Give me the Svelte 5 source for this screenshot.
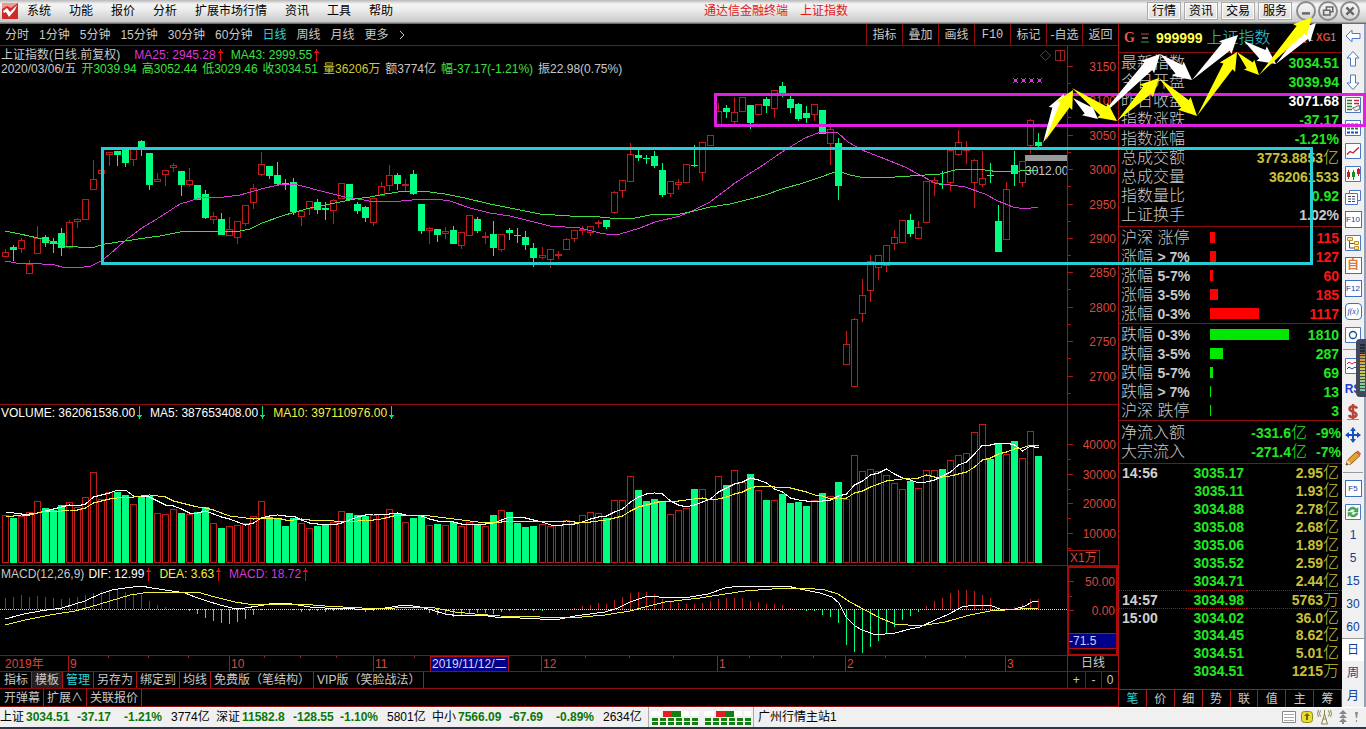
<script lang="ts">
    const menus = ['系统', '功能', '报价', '分析', '扩展市场行情', '资讯', '工具', '帮助'];
    const services = ['行情', '资讯', '交易', '服务'];
    const periods = ['分时', '1分钟', '5分钟', '15分钟', '30分钟', '60分钟', '日线', '周线', '月线', '更多'];
    const tools = ['指标', '叠加', '画线', 'F10', '标记', '-自选', '返回'];
    const templates = ['指标', '模板', '管理', '另存为', '绑定到', '均线', '免费版（笔结构）', 'VIP版（笑脸战法）'];
    const extras = ['开弹幕', '扩展∧', '关联报价'];
    const infoTabs = ['笔', '价', '细', '势', '联', '值', '主', '筹'];

    // side:high,top,bottom,low in plot pixels
    const candles = `
        r203,206,210,211 g199,201,204,215 r192,194,202,207 r214,218,227,227 r180,192,207,207 g189,191,197,201
        g192,195,198,207 g182,187,202,210 r174,176,201,203 r172,173,175,182 r153,153,173,173 r114,133,143,143
        r124,124,127,127 r106,106,108,120 g105,105,109,120 g103,104,117,121 r103,103,113,120 g94,95,103,110
        g107,107,139,144 r127,133,135,136 r124,124,128,140 r117,119,121,126 g125,125,139,150 r122,134,138,141
        g139,139,154,154 g144,148,172,173 r166,170,173,178 g167,173,189,189 r171,183,189,189 r175,175,191,198
        r159,159,177,180 r138,142,156,163 r106,118,128,130 g120,120,130,133 g116,129,138,139 g133,137,138,144
        g132,136,166,169 r165,165,170,180 r155,155,162,169 g153,156,164,168 g156,162,164,174 r153,154,164,178
        r137,137,152,152 g138,138,154,154 g156,158,165,168 g160,161,172,176 r152,152,176,180 r136,140,149,149
        r119,129,139,145 g127,129,138,144 r133,138,139,145 g124,128,148,149 g158,158,185,188 r181,182,184,198
        g183,183,189,196 r181,185,187,193 g180,184,198,198 r186,186,199,203 r169,169,189,189 g171,173,185,187
        r186,190,191,198 g175,188,202,210 r188,188,203,206 g182,184,187,194 g182,189,190,197 g185,191,199,204
        g197,202,212,221 r201,209,211,213 r203,203,213,222 r205,208,209,213 r192,193,203,203 r184,184,192,196
        r180,183,184,189 r180,180,186,190 r174,176,177,182 g174,174,181,183 r145,146,166,168 r134,134,144,152
        r97,108,135,136 g104,109,112,115 g109,112,113,118 g105,110,120,122 g117,124,149,151 r135,135,147,151
        r133,136,138,144 r118,118,136,136 g99,119,120,121 r96,96,126,135 r89,89,99,100 r57,65,78,78
        g59,62,66,72 r51,66,75,78 r51,51,65,65 g59,59,77,83 r58,58,68,68 g51,53,60,67
        r44,44,62,72 g36,40,47,51 g50,53,62,67 g57,58,73,75 g60,67,72,77 r58,58,68,75
        g64,64,88,88 r77,83,97,119 g92,97,140,154 r285,298,318,318 r272,273,340,340 r233,249,267,276
        r209,215,244,256 r209,209,221,234 r199,199,219,226 r184,191,197,204 r174,174,196,197 g168,174,188,191
        r175,181,192,192 r135,135,176,176 r131,134,136,150 g125,138,139,143 r104,104,136,145 r84,96,108,110
        r95,103,104,118 r113,114,136,162 r105,132,138,141 g117,129,130,137 g159,175,206,206 r136,143,193,193
        g105,119,128,140 r115,115,136,141 r73,74,99,108 g87,96,100,101`
        .trim()
        .split(/\s+/)
        .map((row, i) => {
            const [high, top, bottom, low] = row.slice(1).split(',').map(Number);
            return { x: barX(i), up: row[0] === 'r', high, top, bottom, low };
        });

    // bar tops in thirds of a pixel, measured from 15 above the plot
    const volume = [
        346, 354, 347, 337, 304, 324, 329, 316, 307, 321, 290, 217, 296, 275, 276, 286, 313, 288, 289, 340,
        343, 328, 340, 343, 336, 321, 370, 384, 377, 374, 370, 347, 304, 350, 354, 378, 354, 370, 385, 378,
        375, 367, 334, 339, 345, 347, 345, 341, 328, 340, 367, 354, 346, 374, 372, 374, 366, 378, 367, 371,
        378, 346, 331, 336, 369, 381, 378, 372, 379, 376, 361, 370, 346, 337, 340, 354, 301, 301, 229, 270,
        303, 297, 306, 343, 331, 325, 267, 268, 296, 229, 255, 211, 246, 222, 271, 300, 301, 282, 309, 306,
        318, 301, 279, 289, 246, 297, 166, 214, 208, 214, 226, 249, 267, 243, 265, 211, 211, 207, 181, 166,
        160, 97, 73, 177, 132, 163, 123, 175, 94, 168
    ];
    const history = [363, 363, 363, 363, 363, 332, 332, 332, 332];

    const macd = [
        11, 12, 14, 12, 13, 12, 11, 10, 11, 12, 14, 16, 18, 19, 19, 17, 16, 14, 8, 4,
        2, 1, 0, -2, -5, -9, -12, -14, -15, -13, -10, -6, -1, 0, 0, 0, -1, -3, -2, -2,
        -3, -2, -1, 0, -1, -3, -2, 0, 1, 2, 2, 3, 1, -4, -6, -6, -8, -7, -5, -4,
        -4, -5, -3, -2, -1, -1, -2, -2, -1, -1, 0, 1, 3, 4, 6, 5, 9, 12, 16, 17,
        17, 15, 10, 8, 6, 5, 5, 6, 8, 10, 11, 11, 11, 8, 7, 5, 5, 4, 1, 0,
        -2, -2, -6, -8, -14, -36, -43, -44, -38, -32, -25, -18, -11, -7, -3, 3, 8, 11, 16, 19,
        19, 18, 14, 11, 2, 1, 2, 5, 10, 10
    ];

    const ma25 = '5,215 16,217 42,218 55,219 62,221 78,222 91,220 101,215 110,208 127,193 142,182 160,171 180,158 200,152 224,151 240,149 265,142 283,138 298,139 325,146 345,151 358,153 369,155 390,156 412,154 435,153 450,155 470,162 490,167 510,170 530,175 550,180 580,182 600,187 612,189 620,188 640,182 655,176 680,170 692,165 710,156 735,137 760,121 785,104 805,92 818,87 828,86 838,87 848,96 862,104 885,113 905,121 918,128 935,137 950,139 965,141 985,148 998,155 1013,161 1025,163 1038,161';
    const ma43 = '5,185 20,188 38,192 50,195 65,200 78,201 95,201 105,198 125,195 145,192 160,190 185,185 210,185 235,186 250,183 262,177 285,169 310,162 335,157 355,153 370,151 385,148 405,145 422,145 445,148 465,152 490,158 515,163 540,168 570,170 600,171 620,173 635,172 650,169 680,168 690,166 710,161 730,158 750,153 765,149 785,142 800,138 815,133 838,125 850,129 860,131 895,131 925,129 940,128 955,124 970,123 985,124 1000,126 1020,125 1038,124';
    const dif = '5,53 24,48 40,45 62,42 75,38 85,35 100,28 112,24 125,22 141,20 152,22 172,25 185,27 195,31 207,35 220,39 232,42 245,42 258,40 275,37 292,38 310,41 325,42 345,42 365,44 385,42 405,39 420,41 432,44 445,48 460,50 480,49 495,51 520,52 540,53 560,53 575,50 590,48 605,46 618,42 630,36 645,31 653,30 665,32 690,31 708,28 725,22 740,20 770,20 787,20 805,24 820,27 832,31 839,37 846,51 855,60 862,64 876,69 895,67 910,63 920,61 935,54 947,49 962,41 975,39 992,40 1000,43 1015,43 1025,40 1032,36 1038,35';
    const dea = '5,59 25,54 50,49 75,45 90,41 110,35 130,29 150,26 172,26 197,26 215,31 235,36 248,38 300,38 325,40 380,43 410,41 435,42 455,46 475,48 500,50 540,51 570,52 605,49 630,45 645,41 665,36 700,32 725,28 745,25 785,22 805,22 825,24 838,28 850,36 865,44 880,52 895,58 920,60 945,56 970,49 990,45 1020,43 1038,42';

    const priceScale = [3150, 3100, 3050, 3000, 2950, 2900, 2850, 2800, 2750, 2700];
    const volumeScale = [40000, 30000, 20000, 10000];
    const months = [
        { x: 68, label: '9' },
        { x: 229, label: '10' },
        { x: 373, label: '11' },
        { x: 541, label: '12' },
        { x: 717, label: '1' },
        { x: 845, label: '2' },
        { x: 1005, label: '3' }
    ];
    const weekTicks = [108, 148, 188, 264, 300, 336, 414, 585, 629, 673, 749, 781, 813, 885, 925, 965];

    const quote = [
        { name: '最新指数', value: '3034.51', tone: 'down' },
        { name: '今日开盘', value: '3039.94', tone: 'down' },
        { name: '昨日收盘', value: '3071.68', tone: 'flat' },
        { name: '指数涨跌', value: '-37.17', tone: 'down' },
        { name: '指数涨幅', value: '-1.21%', tone: 'down' },
        { name: '总成交额', value: '3773.8853', unit: '亿', tone: 'sum' },
        { name: '总成交量', value: '362061533', tone: 'sum' },
        { name: '指数量比', value: '0.92', tone: 'down' },
        { name: '上证换手', value: '1.02%', tone: 'grey' }
    ];
    const breadth = [
        {
            tone: 'up',
            rows: [['沪深', '涨停', 115], ['涨幅', '> 7%', 127], ['涨幅', '5-7%', 60], ['涨幅', '3-5%', 185], ['涨幅', '0-3%', 1117]]
        },
        {
            tone: 'down',
            rows: [['跌幅', '0-3%', 1810], ['跌幅', '3-5%', 287], ['跌幅', '5-7%', 69], ['跌幅', '> 7%', 13], ['沪深', '跌停', 3]]
        }
    ];
    const flows = [
        { name: '净流入额', value: '-331.6', pct: '-9%' },
        { name: '大宗流入', value: '-271.4', pct: '-7%' }
    ];
    const ticks = [
        ['14:56', '3035.17', '2.95', '亿'],
        ['', '3035.11', '1.93', '亿'],
        ['', '3034.88', '2.78', '亿'],
        ['', '3035.08', '2.68', '亿'],
        ['', '3035.06', '1.89', '亿'],
        ['', '3035.52', '2.59', '亿'],
        ['', '3034.71', '2.44', '亿'],
        ['14:57', '3034.98', '5763', '万'],
        ['15:00', '3034.02', '36.0', '亿'],
        ['', '3034.45', '8.62', '亿'],
        ['', '3034.51', '5.01', '亿'],
        ['', '3034.51', '1215', '万']
    ];
    const markets = [
        ['上证', '3034.51', '-37.17', '-1.21%', '3774亿'],
        ['深证', '11582.8', '-128.55', '-1.10%', '5801亿'],
        ['中小', '7566.09', '-67.69', '-0.89%', '2634亿']
    ];
    const side = [
        'back', 'up', 'down', 'quotes', 'list', 'trend', 'candle', 'pages', 'F10', 'tree', '自', 'F12', 'f(x)', 'ring', '-',
        'waves', 'RS', 'money', 'move', 'pencil', '-', 'F5', 'refresh', '1', '5', '15', '30', '60', '日', '周', '月'
    ];

    // [x1, y1, x2, y2, colour]
    const arrows: [number, number, number, number, string][] = [
        [1043, 143, 1064, 94, 'white'],
        [1073, 98, 1098, 119, 'white'],
        [1098, 119, 1160, 54, 'white'],
        [1160, 54, 1192, 80, 'white'],
        [1192, 80, 1238, 35, 'white'],
        [1244, 41, 1276, 64, 'white'],
        [1276, 64, 1316, 23, 'white'],
        [1045, 141, 1073, 90, 'yellow'],
        [1072, 88, 1117, 121, 'yellow'],
        [1117, 121, 1159, 78, 'yellow'],
        [1159, 78, 1197, 116, 'yellow'],
        [1197, 116, 1237, 52, 'yellow'],
        [1237, 52, 1259, 75, 'yellow'],
        [1259, 75, 1312, 17, 'yellow']
    ];

    function barX(i: number) {
        return 5.5 + 8 * i + (i > 66 ? 1 : 0);
    }

    function average(n: number) {
        const all = [...history, ...volume];
        return volume
            .map((_, i) => {
                const end = i + history.length + 1;
                const sum = all.slice(end - n, end).reduce((a, b) => a + b, 0);
                return `${barX(i)},${Math.round(sum / n / 3 - 5)}`;
            })
            .join(' ');
    }

    function arrowShape(x1: number, y1: number, x2: number, y2: number) {
        const len = Math.hypot(x2 - x1, y2 - y1);
        const ux = (x2 - x1) / len;
        const uy = (y2 - y1) / len;
        const size = Math.min(18, len * 0.45);
        const at = (along: number, off: number) => `${x2 - ux * along - uy * off},${y2 - uy * along + ux * off}`;
        return [
            `${x1},${y1}`,
            at(size - 1, size * 0.3),
            at(size, size * 0.5),
            `${x2},${y2}`,
            at(size, -size * 0.5),
            at(size - 1, -size * 0.3)
        ].join(' ');
    }
</script>

{#snippet pointer(dir: string)}
    <svg class="pointer {dir}" viewBox="0 0 5 14" aria-hidden="true">
        {#if dir === 'rise'}
            <path d="M2.5 1v13M0 4.5h5M1 3.5h3M2 1.5h1" />
        {:else}
            <path d="M2.5 0v13M0 9.5h5M1 10.5h3M2 12.5h1" />
        {/if}
    </svg>
{/snippet}

{#snippet sideIcon(name: string)}
    <svg class="icon" viewBox="0 0 18 18" aria-hidden="true">
        {#if name === 'back'}
            <path d="M2 9l6-6v3.5h8v5H8V15z" fill="#fff" stroke="#4a78c8" />
        {:else if name === 'up'}
            <path d="M9 1.500l6 6.500h-3.500v8h-5V8H3z" fill="#fff" stroke="#4a78c8" />
        {:else if name === 'down'}
            <path d="M9 16.500l6-6.500h-3.500V2h-5v8H3z" fill="#fff" stroke="#4a78c8" />
        {:else if name === 'pages'}
            <path d="M5.500 2.500h11v10h-11z" fill="#fff" stroke="#4a78c8" />
            <path d="M1.500 5.500h12v11h-12z" fill="#fff" stroke="#4a78c8" />
            <path d="M4 8.500h7M4 11h7M4 13.500h7" stroke="#445" stroke-dasharray="3 1" />
        {:else if name === 'money'}
            <path d="M13 5.500C12 2.500 5.500 2.800 5.500 6s7 2.500 7 5.500-6.500 3.500-7.500.5M9 1v16" fill="none" stroke="#b8443c" stroke-width="2.500" />
            <path d="M3 16.500h12" stroke="#888" />
        {:else if name === 'move'}
            <path d="M9 1l3 4H6zM9 17l3-4H6zM1 9l4-3v6zM17 9l-4-3v6zM8 5h2v8H8zM5 8h8v2H5z" fill="#1450c0" />
        {:else if name === 'pencil'}
            <path d="M2 16l1.500-5L12 3l4 3.500L7 15z" fill="#e8a030" stroke="#8a5a20" />
            <path d="M12 3l2-1.500 3 3L16 6.500z" fill="#e06050" />
            <path d="M2 16l1.500-5 3.500 4z" fill="#f8e0b0" />
            <path d="M2 16l.8-2 1.500 1.200z" fill="#222" />
        {:else}
            <path d="M1.500 1.500h15v15h-15z" fill="#fff" stroke="#4a78c8" />
            {#if name === 'quotes'}
                <path d="M3 4.500h5M3 7.500h5M3 10.500h5M3 13.500h5" stroke="#208030" stroke-width="1.500" />
                <path d="M10 4.500h5M10 7.500h5" stroke="#d02030" stroke-width="1.500" />
                <path d="M8.500 12l3 3 4.500-2-1-4-3.500 2z" fill="#eee" stroke="#666" />
            {:else if name === 'list'}
                <path d="M3 5.500h12" stroke="#d02030" stroke-width="2" stroke-dasharray="3 1" />
                <path d="M3 9.500h12" stroke="#208030" stroke-width="2" stroke-dasharray="3 1" />
                <path d="M3 13.500h12" stroke="#2040c0" stroke-width="2" stroke-dasharray="3 1" />
            {:else if name === 'trend'}
                <path d="M3 12.500l3-3 3 1.500 3-3 3-2.500" fill="none" stroke="#c02030" stroke-width="1.300" />
            {:else if name === 'candle'}
                <path d="M4.500 5v9M14.500 3v8" stroke="#d02020" />
                <path d="M3 7h3v5H3zM13 4h3v5h-3z" fill="#d02020" />
                <path d="M9.500 5v10" stroke="#109020" />
                <path d="M8 7h3v5H8z" fill="#109020" />
            {:else if name === 'tree'}
                <path d="M5.500 6v8h5M5.500 9.500h5" fill="none" stroke="#557" />
                <path d="M3.500 3.500h5v3h-5zM10.500 7.500h4v3h-4zM10.500 12.500h4v3h-4z" fill="#fde89a" stroke="#c09020" />
            {:else if name === 'ring'}
                <circle cx="9" cy="9" r="3.500" fill="none" stroke="#1a4a90" stroke-width="1.300" />
            {:else if name === 'waves'}
                <path d="M3 7l2-2 3 2 3-2 2 2 2-2" fill="none" stroke="#c02030" />
                <path d="M3 12l2-2 3 2 3-2 2 2 2-2" fill="none" stroke="#2040c0" />
            {:else if name === 'refresh'}
                <path d="M4 8c1-5 7-5 8.500-2L14 4.500V9H9.500l1.500-1.500C9.500 5.500 6.500 6 6 8zM14 10c-1 5-7 5-8.500 2L4 13.500V9.500h4.500L7 11c1.500 1.500 4 1 5-1z" fill="#40b050" stroke="#208030" stroke-width=".4" />
            {/if}
        {/if}
    </svg>
{/snippet}

<div class="terminal">
    <header class="titlebar">
        <svg class="logo" viewBox="0 0 16 16" aria-hidden="true">
            <path d="M0 0h16v16H0z" fill="#cf2a2a" />
            <path d="M0 0h16L9 5 5 3 0 6z" fill="#f09a94" />
            <path d="M1 8l4-3 3 4 7-7-2 5-6 7-3-5-2 1z" fill="#fff" />
        </svg>
        <nav class="menus">
            {#each menus as menu}
                <button>{menu}</button>
            {/each}
        </nav>
        <h1 class="app-title"><span>通达信金融终端</span><span>上证指数</span></h1>
        <div class="services">
            {#each services as service}
                <button>{service}</button>
            {/each}
        </div>
        <div class="window-buttons">
            <button aria-label="最小化"><svg viewBox="0 0 20 20"><path d="M5 13h10" stroke-width="3" /></svg></button>
            <button aria-label="还原"><svg viewBox="0 0 20 20"><path d="M8 8V5h8v6h-3M4.500 9h8v6h-8z" stroke-width="2" /></svg></button>
            <button aria-label="关闭"><svg viewBox="0 0 20 20"><path d="M5.500 5.500l9 9M14.500 5.500l-9 9" stroke-width="3" /></svg></button>
        </div>
    </header>

    <main>
        <section class="charts">
            <div class="periods">
                {#each periods as period}
                    <button class:active={period === '日线'}>{period}</button>
                {/each}
                <svg class="chevron" viewBox="0 0 6 10" aria-hidden="true"><path d="M1 1l4 4-4 4" /></svg>
                <div class="tools">
                    {#each tools as tool}
                        <button class:latin={tool === 'F10'}>{tool}</button>
                    {/each}
                </div>
            </div>

            <div class="panel price">
                <div class="legend">
                    <p>
                        <span>上证指数(日线.前复权)</span>
                        <span class="magenta ma-first">MA25: 2945.28{@render pointer('rise')}</span>
                        <span class="green">MA43: 2999.55{@render pointer('rise')}</span>
                    </p>
                    <p class="ohlc">
                        <span>2020/03/06/五</span>
                        <span class="green">开3039.94</span>
                        <span class="green">高3052.44</span>
                        <span class="green">低3029.46</span>
                        <span class="green">收3034.51</span>
                        <span class="yellow">量36206万</span>
                        <span>额3774亿</span>
                        <span class="green">幅-37.17(-1.21%)</span>
                        <span>振22.98(0.75%)</span>
                    </p>
                </div>
                <svg class="plot">
                    {#each candles as c}
                        {#if c.up}
                            <path class="rise-line" d="M{c.x} {c.high}V{c.top}M{c.x} {c.bottom}V{c.low}M{c.x - 3} {c.top + 0.5}h6V{c.bottom + 0.5}h-6z" />
                        {:else}
                            <path class="fall-line" d="M{c.x} {c.high}V{c.low}" />
                            <rect class="fall-fill" x={c.x - 3.5} y={c.top} width="7" height={c.bottom - c.top} />
                        {/if}
                    {/each}
                    <polyline class="line magenta" points={ma25} />
                    <polyline class="line green" points={ma43} />
                    <g class="marks">
                        {#each [1015, 1023, 1031, 1039] as x}
                            <path d="M{x - 2} 32.500h1m3 0h1M{x - 1} 33.500h3M{x - 1} 34.500h3M{x - 1} 35.500h3M{x - 2} 36.500h1m3 0h1" />
                        {/each}
                    </g>
                    <path class="frame-icon" d="M1045.500 4.500l5 5-5 5-5-5zM1055.500 4.500h9v10h-9zM1060.500 4.500v10" />
                    <rect x="1025" y="109" width="42" height="6" fill="#999" />
                    <text class="cost" x="1025" y="129">3012.00</text>
                </svg>
            </div>
            <svg class="axis price-axis">
                {#each priceScale as price, i}
                    <path d="M0 {20.5 + Math.round(i * 34.4)}h5M0 {37.5 + Math.round(i * 34.4)}h3" />
                    <text x="48" y={25 + Math.round(i * 34.4)}>{price}</text>
                {/each}
            </svg>

            <div class="panel volume">
                <div class="legend">
                    <p class="series">
                        <span class="white">VOLUME: 362061536.00{@render pointer('fall')}</span>
                        <span class="white">MA5: 387653408.00{@render pointer('fall')}</span>
                        <span class="yellow">MA10: 397110976.00{@render pointer('fall')}</span>
                    </p>
                </div>
                <svg class="plot">
                    {#each volume as v, i}
                        {@const top = Math.round(v / 3 - 5)}
                        {#if candles[i].up}
                            <path class="rise-line" d="M{barX(i) - 3} {top + 0.5}h6V157.500h-6z" />
                        {:else}
                            <rect class="fall-fill" x={barX(i) - 3.5} y={top} width="7" height={158 - top} />
                        {/if}
                    {/each}
                    <polyline class="line white" points={average(5)} />
                    <polyline class="line yellow" points={average(10)} />
                </svg>
            </div>
            <div class="axis volume-axis">
                <svg>
                    {#each volumeScale as level, i}
                        <path d="M0 {39.5 + Math.round(i * 29.6)}h5M0 {54.5 + Math.round(i * 29.6)}h3" />
                        <text x="48" y={44 + Math.round(i * 29.6)}>{level}</text>
                    {/each}
                </svg>
                <span class="unit">X1万</span>
            </div>

            <div class="panel macd">
                <div class="legend">
                    <p class="series">
                        <span class="macd-name">MACD(12,26,9)</span>
                        <span class="white">DIF: 12.99{@render pointer('rise')}</span>
                        <span class="yellow">DEA: 3.63{@render pointer('rise')}</span>
                        <span class="magenta">MACD: 18.72{@render pointer('rise')}</span>
                    </p>
                </div>
                <svg class="plot">
                    {#each macd as m, i}
                        <path class={m > 0 ? 'rise-line' : 'fall-line'} d="M{barX(i)} 43v{-m}" />
                    {/each}
                    <path class="zero" d="M0 43.500h2000" />
                    <polyline class="line white" points={dif} />
                    <polyline class="line yellow" points={dea} />
                </svg>
            </div>
            <div class="axis macd-axis">
                <svg>
                    <path d="M0 13.500h5M0 28.500h3M0 42.500h5" />
                    <text x="46" y="18">50.00</text>
                    <text x="46" y="47">0.00</text>
                </svg>
                <span class="cursor">-71.5</span>
            </div>

            <div class="panel dates">
                <svg class="plot">
                    <text x="5" y="12">2019年</text>
                    {#each months as m}
                        <path d="M{m.x + 0.5} 0v16" />
                        <text x={m.x + 2} y="12">{m.label}</text>
                    {/each}
                    {#each weekTicks as x}
                        <path d="M{x + 0.5} 0v2" />
                    {/each}
                    <rect x="430.500" y="0.500" width="78" height="15" />
                    <text class="cursor-date" x="432" y="12">2019/11/12/二</text>
                </svg>
            </div>
            <div class="axis dates-axis">日线</div>

            <div class="tabs">
                {#each templates as tab}
                    <button class:active={tab === '管理'} class:pressed={tab === '模板'}>{tab}</button>
                {/each}
            </div>
            <div class="zoom">
                <button>+</button>
                <button>-</button>
                <button>0</button>
            </div>

            <div class="tabs extras">
                {#each extras as tab}
                    <button>{tab}</button>
                {/each}
            </div>
        </section>

        <aside class="info">
            <h2>
                <b class="flag">G</b>
                <svg class="bars" viewBox="0 0 8 10" aria-hidden="true">
                    <path d="M0 1h8" stroke="#d04040" /><path d="M1 5h6" stroke="#ccc" /><path d="M0 9h8" stroke="#30a040" />
                </svg>
                <b class="code">999999</b>
                <span class="name">上证指数</span>
                <span class="tags"><b>Q</b>1 <b>XG</b>1</span>
            </h2>
            <table class="quote">
                <tbody>
                    {#each quote as q}
                        <tr>
                            <th scope="row">{q.name}</th>
                            <td class={q.tone}>{q.value}{#if q.unit}<i>{q.unit}</i>{/if}</td>
                        </tr>
                    {/each}
                </tbody>
            </table>
            {#each breadth as group}
                <table class="breadth {group.tone}">
                    <tbody>
                        {#each group.rows as [name, range, count]}
                            <tr>
                                <th scope="row">{name} {#if /\d/.test(String(range))}<b>{range}</b>{:else}{range}{/if}</th>
                                <td class="meter"><div style="width: {Math.max(1, Math.round(Number(count) / 22.9))}px"></div></td>
                                <td>{count}</td>
                            </tr>
                        {/each}
                    </tbody>
                </table>
            {/each}
            <table class="flows">
                <tbody>
                    {#each flows as f}
                        <tr>
                            <th scope="row">{f.name}</th>
                            <td class="down">{f.value}<i>亿</i></td>
                            <td class="down pct">{f.pct}</td>
                        </tr>
                    {/each}
                </tbody>
            </table>
            <table class="ticks">
                <tbody>
                    {#each ticks as [time, price, amount, unit], i}
                        <tr class:dotted={time && i}>
                            <td class="time">{time}</td>
                            <td class="down">{price}</td>
                            <td class="sum">{amount}<i>{unit}</i></td>
                        </tr>
                    {/each}
                </tbody>
            </table>
            <div class="info-tabs">
                {#each infoTabs as tab, i}
                    <button class:active={i === 0}>{tab}</button>
                {/each}
            </div>
        </aside>

        <nav class="side">
            {#each side as item}
                {#if item === '-'}
                    <hr />
                {:else if /^[a-z]+$/.test(item)}
                    <button aria-label={item}>{@render sideIcon(item)}</button>
                {:else if /^F|自|f/.test(item)}
                    <button><span class="boxed" class:orange={item === '自'} class:fx={item === 'f(x)'}>{item}</span></button>
                {:else}
                    <button class="plain" class:rs={item === 'RS'} class:on={item === '日'}>{item}</button>
                {/if}
            {/each}
        </nav>
    </main>

    <footer class="status">
        {#each markets as [name, price, change, pct, amount]}
            <div class="market">
                <span>{name}</span><b>{price}</b><b>{change}</b><b>{pct}</b><span>{amount}</span>
            </div>
        {/each}
        <div class="link">
            <svg viewBox="0 0 100 16" aria-hidden="true">
                {#each [0, 53] as x}
                    <path d="M{x} 2h10v5H{x}zM{x + 30} 2h8v5h-8zM{x + 40} 2h8v5h-8z" fill="#fff" />
                    <path d="M{x + 12} 2h9v6h-9z" fill="#e02020" />
                    <path d="M{x + 21} 2h9v6h-9z" fill="#148014" />
                    <path d="M{x + 1} 10.500h46M{x + 1} 14.500h46" stroke="#148014" stroke-width="3" stroke-dasharray="6 2" />
                {/each}
            </svg>
        </div>
        <span>广州行情主站1</span>
        <svg class="tray" viewBox="0 0 80 16" aria-hidden="true">
            <path d="M.5 2.500h13v11H.5z" fill="#fff" stroke="#888" />
            <path d="M2 5.500h10M2 8.500h10M2 11.500h10" stroke="#aaa" />
            <rect x="19.500" y="2.500" width="11" height="11" rx="3" fill="#e8dc30" stroke="#908810" />
            <path d="M25 4l3 3h-2v4h-2V7h-2z" fill="#706808" />
            <path d="M42.500 5l-3 10h6zM41 10h3M42.500 1v4M38.500 1.500q-2 3 0 6M46.500 1.500q2 3 0 6M36.500 1q-2 4 0 7M48.500 1q2 4 0 7" fill="none" stroke="#8a8450" />
            <path d="M61 1l4 4h-8zM61 5l4 4h-8zM61 9l4 4h-8zM60 12h2v3h-2zM73 3h3l-1 6h-1zM74 11h1v2h-1z" fill="#888" />
        </svg>
    </footer>

    <svg class="drawings" aria-hidden="true">
        <rect x="102.500" y="148.500" width="1209" height="115" stroke="#26cfd6" />
        <rect x="715.500" y="94.500" width="649" height="31" stroke="#e020e0" />
        {#each arrows as [x1, y1, x2, y2, colour]}
            <polygon points={arrowShape(x1, y1, x2, y2)} fill={colour === 'white' ? '#fff' : '#ff0'} />
        {/each}
    </svg>
    <div class="gauge" aria-hidden="true"></div>
</div>

<style>
    :global(body) {
        background: #000;
    }

    .terminal {
        --line: #8e0c0c;
        --sans: "Liberation Sans", "Noto Sans CJK SC", sans-serif;
        position: relative;
        display: flex;
        flex-direction: column;
        min-height: 100vh;
        box-sizing: border-box;
        overflow: hidden;
        background: #000;
        border-bottom: 2px solid #2c3848;
        color: #c8c8c8;
        font: 12px/14px var(--sans);
    }

    button {
        appearance: none;
        margin: 0;
        padding: 0;
        border: 0;
        background: none;
        color: inherit;
        font: inherit;
        white-space: nowrap;
        cursor: pointer;
    }

    h1, h2, p { margin: 0; font: inherit; }
    i { font-style: normal; font-weight: 300; }
    table { border-collapse: separate; border-spacing: 0; width: 100%; table-layout: fixed; }
    th, td { padding: 0; }

    .white { color: #fff; }
    .green { color: #3fe03f; }
    .yellow { color: #f4f040; }
    .magenta { color: #d838d8; }

    .titlebar {
        display: flex;
        align-items: center;
        height: 24px;
        box-sizing: border-box;
        padding: 0 6px 2px 2px;
        background: linear-gradient(#b8b8b8, #f4f4f4 4px, #ececec 10px, #c8c8c8 22px, #707070 23px);
        color: #000;
    }

    .logo { width: 16px; height: 16px; }

    .menus {
        display: flex;
        gap: 18px;
        margin-left: 9px;
    }

    .app-title {
        display: flex;
        gap: 12px;
        margin: 0 auto;
        padding-left: 12px;
        color: #e01818;
    }

    .services { display: flex; gap: 3px; }

    .services button {
        width: 34px;
        height: 18px;
        border: 1px solid #aaa;
        background: linear-gradient(#f6f6f6, #dcdcdc);
        box-shadow: inset 0 0 0 1px #fafafa;
    }

    .window-buttons { display: flex; gap: 2px; margin-left: 4px; }

    .window-buttons button {
        width: 20px;
        height: 20px;
        border: 2px solid #8a8a8a;
        border-radius: 50%;
        box-sizing: border-box;
    }

    .window-buttons svg {
        display: block;
        width: 16px;
        height: 16px;
        fill: none;
        stroke: #666;
    }

    main {
        display: grid;
        grid-template-columns: minmax(0, 1fr) 224px 24px;
        flex: 1;
    }

    .charts {
        display: grid;
        grid-template-columns: minmax(0, 1fr) 51px;
        grid-template-rows: 22px 359px 161px 90px 16px 17px 18px;
    }

    .periods {
        grid-column: 1 / -1;
        display: flex;
        align-items: center;
        gap: 10px;
        padding-left: 5px;
        border-bottom: 1px solid var(--line);
    }

    .active { color: #30d0d8; }
    .chevron { width: 6px; height: 10px; fill: none; stroke: #c8c8c8; }
    .tools { display: flex; align-self: stretch; margin-left: auto; }

    .tools button {
        width: 36px;
        border-left: 1px solid var(--line);
    }

    .latin { font-family: "Liberation Mono", monospace; }

    .panel {
        position: relative;
        border-bottom: 1px solid var(--line);
        min-width: 0;
    }

    .plot, .axis svg {
        display: block;
        width: 100%;
        height: 100%;
        shape-rendering: crispEdges;
    }

    .legend {
        position: absolute;
        top: 2px;
        left: 1px;
        white-space: nowrap;
    }

    .volume .legend, .macd .legend { top: 1px; }
    .legend p { display: flex; gap: 8px; }
    .legend .ohlc { gap: 5px; }
    .legend .ohlc .yellow { color: #d0c830; }
    .ma-first { margin-left: 6px; }
    .series .macd-name { margin-right: -4px; }

    .pointer {
        width: 5px;
        height: 14px;
        margin-left: 2px;
        vertical-align: top;
        shape-rendering: crispEdges;
    }

    .pointer.rise { stroke: #e01010; }
    .pointer.fall { stroke: #00e878; }

    .rise-line { fill: none; stroke: #c01c1c; }
    .fall-line { stroke: #00ff80; }
    .fall-fill { fill: #00ff80; }
    .line { fill: none; stroke: currentColor; }
    .marks { fill: none; stroke: #e030e0; }
    .frame-icon { fill: none; stroke: #a02020; }
    .cost { fill: #c8c8c8; font-size: 12px; }
    .zero { stroke: #ddd; stroke-dasharray: 1 1; }

    .axis {
        box-sizing: border-box;
        width: 100%;
        height: 100%;
        border-left: 1px solid #b01010;
        border-bottom: 1px solid var(--line);
    }

    .axis path, .dates path { stroke: #b01414; }
    .axis text { fill: #d8483c; text-anchor: end; }
    .volume-axis { display: flex; position: relative; }

    .unit {
        position: absolute;
        left: 0;
        bottom: 0;
        padding: 0 2px;
        border: 1px solid #b01010;
        border-width: 1px 1px 0 0;
        color: #d8483c;
    }

    .macd-axis {
        position: relative;
        border: 2px solid #b00808;
    }

    .cursor {
        position: absolute;
        left: 0;
        right: 0;
        bottom: 5px;
        height: 14px;
        border: 1px solid #b01010;
        border-width: 1px 0;
        background: #000088;
        color: #d0d0f0;
    }

    .dates text { fill: #d8483c; }
    .dates rect { fill: #000088; stroke: #b01010; }
    .dates .cursor-date { fill: #d8d8f8; }
    .dates-axis { text-align: center; }

    .tabs {
        display: flex;
        padding-left: 1px;
        border-bottom: 1px solid var(--line);
    }

    .tabs button {
        padding: 0 3px;
        border-right: 1px solid #b01414;
    }

    .tabs.extras { grid-column: 1 / -1; }
    .pressed { background: #262020; }

    .zoom {
        display: grid;
        grid-template-columns: 1fr 1fr 1fr;
        border-left: 1px solid var(--line);
        border-bottom: 1px solid var(--line);
    }

    .zoom button + button { border-left: 1px solid var(--line); }

    .info {
        display: flex;
        flex-direction: column;
        border-left: 1px solid #b01010;
    }

    .info h2 {
        display: flex;
        align-items: center;
        height: 28px;
        padding: 0 6px 0 5px;
        border-bottom: 1px solid var(--line);
    }

    .flag { color: #e85848; font: bold 14px/16px "Liberation Serif", serif; }
    .bars { width: 8px; height: 10px; margin: 0 7px 0 6px; }
    .code { color: #ffff50; font-size: 14px; }
    .name { margin-left: 4px; color: #30c8d8; font-size: 16px; font-weight: 300; }
    .tags { margin-left: auto; font-size: 10px; color: #aaa; }
    .tags b { color: #d84838; }

    .info table {
        border-bottom: 1px solid var(--line);
        font-size: 14px;
        line-height: 18px;
    }

    .info tr { height: 19px; }
    .info th { text-align: left; padding-left: 2px; font-size: 16px; font-weight: 300; white-space: nowrap; }
    .info th b { font-size: 14px; font-weight: bold; }
    .info td { text-align: right; padding-right: 3px; font-weight: bold; white-space: nowrap; }
    .info td i { font-size: 16px; }
    .quote { padding-bottom: 2px; }

    .info .down { color: #20e820; }
    .info .flat { color: #fff; }
    .info .sum { color: #c8c038; }
    .info .grey { color: #c8c8c8; }

    .breadth th { width: 89px; }
    .breadth.up td { color: #ff1414; }
    .breadth.down th, .breadth.up th { color: #c8c8c8; }
    .breadth { padding-top: 1px; }

    .meter div {
        height: 11px;
        background: #ff0000;
    }

    .down .meter div { background: #00e800; }

    .flows { padding: 2px 0; }
    .flows .pct { width: 31px; padding-right: 1px; }

    .info .ticks tr { height: 18px; }
    .info .ticks { border-bottom: 0; line-height: 17px; }
    .ticks .time { text-align: left; padding-left: 3px; color: #d0d0d0; width: 61px; }
    .ticks .down { width: 58px; }
    .dotted td { border-top: 1px dotted #a01414; line-height: 16px; }

    .info-tabs {
        display: grid;
        grid-template-columns: repeat(8, 1fr);
        height: 18px;
        margin-top: auto;
        border-top: 1px solid #b01414;
        box-sizing: border-box;
    }

    .info-tabs button { border-right: 1px solid #b01414; }

    .side {
        display: flex;
        flex-direction: column;
        align-items: stretch;
        background: #f0f0f0;
        border-right: 2px solid #8fa0b8;
        color: #10409a;
    }

    .side button { height: 23px; }
    .side .icon { display: block; width: 18px; height: 18px; margin: 0 auto; }
    .side hr { width: 20px; margin: 3px auto 4px; border: 0; border-top: 1px solid #999; }

    .boxed {
        display: block;
        width: 15px;
        height: 15px;
        margin: 0 auto;
        border: 1px solid #3a70c0;
        background: #fff;
        font-size: 8px;
        line-height: 15px;
        text-align: center;
    }

    .orange { color: #e07840; font-weight: bold; font-size: 12px; }
    .fx { font-style: italic; font-family: "Liberation Serif", serif; border-radius: 4px; }
    .rs { font-weight: bold; color: #2040d0; }
    .on { background: #fff; box-shadow: inset 0 1px #999; }

    .status {
        display: flex;
        align-items: center;
        height: 20px;
        background: #f0f0f0;
        box-shadow: inset 0 1px #fff;
        color: #000;
    }

    .market {
        display: grid;
        grid-template-columns: 26px 51px 47px 47px 45px;
    }

    .market b { color: #087808; }

    .link {
        padding: 2px 2px;
        margin-right: 4px;
        border: 1px solid #aaa;
        border-width: 0 1px;
    }

    .link svg { display: block; width: 100px; height: 16px; }
    .tray { width: 80px; height: 16px; margin-left: auto; margin-right: 4px; }

    .drawings {
        position: absolute;
        inset: 0;
        width: 100%;
        height: 100%;
        fill: none;
        stroke-width: 3px;
        pointer-events: none;
    }

    .gauge {
        position: absolute;
        right: 0;
        top: 339px;
        width: 5px;
        height: 48px;
        border: 5px solid #40485a;
        border-width: 5px 1px 5px 4px;
        border-radius: 4px 0 0 4px;
        background:
            repeating-linear-gradient(transparent 0 2px, #40485a 2px 3px),
            linear-gradient(#20283a 10px, #c88840 10px, #d8c850 26px, #60d0b0);
    }
</style>
